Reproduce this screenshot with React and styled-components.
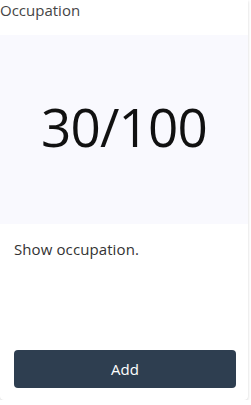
import styled, { createGlobalStyle } from "styled-components";

const GlobalStyle = createGlobalStyle`
  body {
    margin: 0;
    background: #ffffff;
    font-family: "Open Sans", "Noto Sans", sans-serif;
  }
`;

const Card = styled.div`
  width: 248px;
  height: 400px;
  display: flex;
  flex-direction: column;
  background: #ffffff;
  box-shadow: 0 1px 3px rgba(0, 0, 0, 0.18);
  border-radius: 0 0 4px 4px;
`;

const Title = styled.div`
  height: 35px;
  box-sizing: border-box;
  font-size: 15px;
  line-height: 21px;
  color: #454545;
`;

const Preview = styled.div`
  height: 189px;
  background: #f9f9fe;
  display: flex;
  align-items: center;
  justify-content: center;
`;

const Occupation = styled.span`
  font-family: "Open Sans", "Noto Sans", sans-serif;
  font-size: 53px;
  font-weight: 500;
  letter-spacing: -0.8px;
  color: #111111;
  margin-top: -6px;
`;

const Description = styled.p`
  margin: 0;
  padding: 15px 14px 0;
  flex: 1;
  font-size: 15px;
  letter-spacing: 0.1px;
  line-height: 21px;
  color: #333333;
`;

const AddButton = styled.button`
  margin: 0 12px 12px 14px;
  height: 38px;
  border: none;
  border-radius: 4px;
  background: #2e3e50;
  color: #ffffff;
  font-family: "Open Sans", "Noto Sans", sans-serif;
  font-size: 15px;
  font-weight: 500;
  cursor: pointer;
`;

export default function App() {
  return (
    <>
      <GlobalStyle />
      <Card>
        <Title>Occupation</Title>
        <Preview>
          <Occupation>30/100</Occupation>
        </Preview>
        <Description>Show occupation.</Description>
        <AddButton>Add</AddButton>
      </Card>
    </>
  );
}
